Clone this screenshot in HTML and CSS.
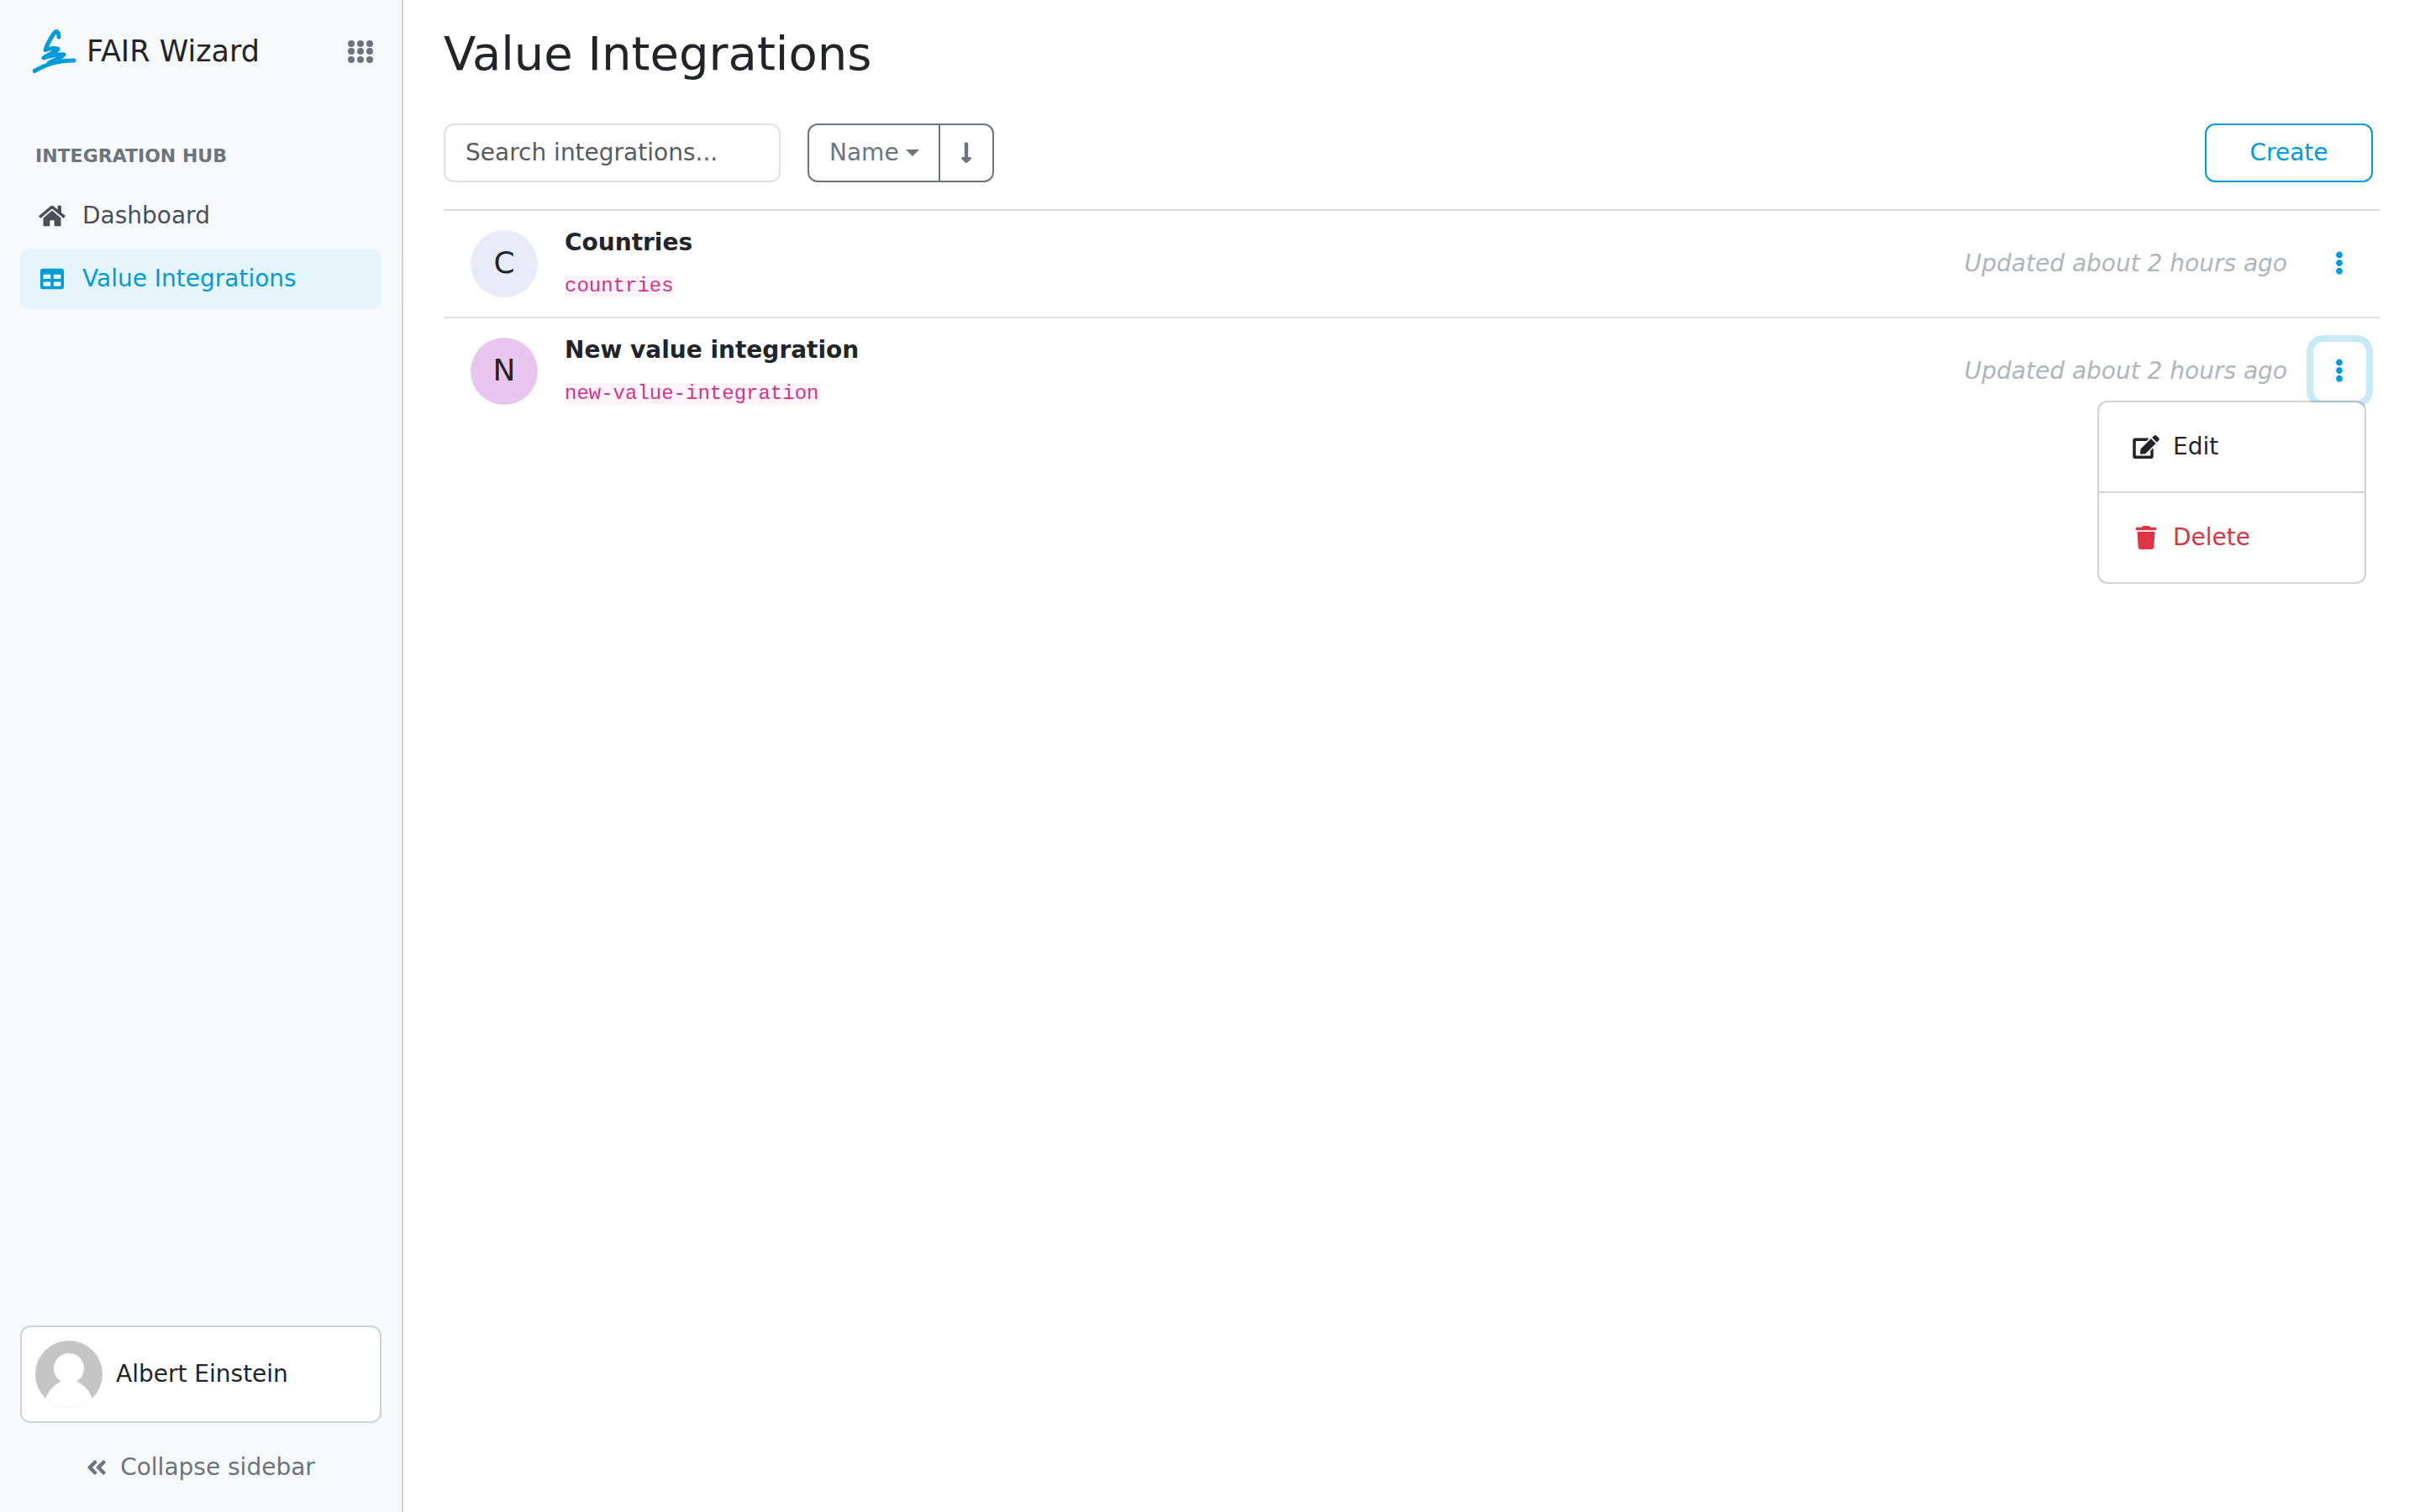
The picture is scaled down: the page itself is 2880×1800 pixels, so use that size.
FILE: index.html
```html
<!DOCTYPE html>
<html lang="en">
<head>
<meta charset="utf-8">
<title>Value Integrations – FAIR Wizard</title>
<meta name="viewport" content="width=device-width, initial-scale=1">
<link rel="stylesheet" href="styles.css">
</head>
<body>
<div class="app">
  <aside class="sidebar">
    <header class="brand">
      <a class="brand-link" href="#">
        <svg class="logo" viewBox="0 0 52 52" aria-hidden="true"><path d="M31 9C31 2 28 1 25 5C21 11 17 18 15 24.500C20 22 29 22 30 23.500C29 26 16 31 13 34C20 31 32 29 37 30C35 34 27 35 19 40" /><path d="M2 49.500C17 41 30 37 49 37"/></svg>
        <span>FAIR Wizard</span>
      </a>
      <button class="apps" type="button" aria-label="Apps">
        <svg viewBox="0 0 30 27" aria-hidden="true"><circle cx="4" cy="4" r="4"/><circle cx="15" cy="4" r="4"/><circle cx="26" cy="4" r="4"/><circle cx="4" cy="13" r="4"/><circle cx="15" cy="13" r="4"/><circle cx="26" cy="13" r="4"/><circle cx="4" cy="23" r="4"/><circle cx="15" cy="23" r="4"/><circle cx="26" cy="23" r="4"/></svg>
      </button>
    </header>
    <nav class="menu" aria-labelledby="menu-title">
      <h2 class="menu-title" id="menu-title">INTEGRATION HUB</h2>
      <a class="menu-item" href="#">
        <svg class="icon" viewBox="0 0 576 512" aria-hidden="true"><path d="M280.37 148.26L96 300.11V464a16 16 0 0 0 16 16l112.06-.29a16 16 0 0 0 15.92-16V368a16 16 0 0 1 16-16h64a16 16 0 0 1 16 16v95.64a16 16 0 0 0 16 16.05L464 480a16 16 0 0 0 16-16V300L295.67 148.26a12.19 12.19 0 0 0-15.3 0zM571.6 251.47L488 182.56V44.05a12 12 0 0 0-12-12h-56a12 12 0 0 0-12 12v72.61L318.47 43a48 48 0 0 0-61 0L4.34 251.47a12 12 0 0 0-1.6 16.9l25.5 31A12 12 0 0 0 45.15 301l235.22-193.74a12.19 12.19 0 0 1 15.3 0L530.9 301a12 12 0 0 0 16.9-1.6l25.5-31a12 12 0 0 0-1.7-16.93z"/></svg>
        <span>Dashboard</span>
      </a>
      <a class="menu-item active" href="#" aria-current="page">
        <svg class="icon" viewBox="0 0 512 512" aria-hidden="true"><path d="M464 32H48C21.49 32 0 53.49 0 80v352c0 26.51 21.49 48 48 48h416c26.51 0 48-21.49 48-48V80c0-26.51-21.49-48-48-48zM224 416H64v-96h160v96zm0-160H64v-96h160v96zm224 160H288v-96h160v96zm0-160H288v-96h160v96z"/></svg>
        <span>Value Integrations</span>
      </a>
    </nav>
    <footer class="sidebar-footer">
      <button class="user" type="button">
        <svg class="user-photo" viewBox="0 0 80 80" aria-hidden="true"><clipPath id="round"><circle cx="40" cy="40" r="40"/></clipPath><g clip-path="url(#round)"><rect width="80" height="80" fill="#c5c5c5"/><circle cx="40" cy="33" r="18" fill="#fff"/><path d="M32 48C22 52 15 60 12 70V80H68V70C65 60 58 52 48 48z" fill="#fff"/></g></svg>
        <span>Albert Einstein</span>
      </button>
      <button class="collapse" type="button">
        <svg class="icon-angles" viewBox="0 0 448 512" aria-hidden="true"><path d="M223.7 239l136-136c9.4-9.4 24.6-9.4 33.9 0l22.6 22.6c9.4 9.4 9.4 24.6 0 33.9L319.9 256l96.4 96.4c9.4 9.4 9.4 24.6 0 33.9L393.7 409c-9.4 9.4-24.6 9.4-33.9 0l-136-136c-9.5-9.4-9.5-24.6-.1-34zm-192 34l136 136c9.4 9.4 24.6 9.4 33.9 0l22.6-22.6c9.4-9.4 9.4-24.6 0-33.9L127.9 256l96.4-96.4c9.4-9.4 9.4-24.6 0-33.9L201.7 103c-9.4-9.4-24.6-9.4-33.9 0l-136 136c-9.5 9.4-9.5 24.6-.1 34z"/></svg>
        <span>Collapse sidebar</span>
      </button>
    </footer>
  </aside>

  <main class="content">
    <h1 class="title">Value Integrations</h1>
    <div class="toolbar">
      <input class="search" type="text" placeholder="Search integrations..." aria-label="Search integrations">
      <div class="sort" role="group" aria-label="Sort">
        <button class="sort-by" type="button">Name<span class="caret"></span></button>
        <button class="sort-dir" type="button" aria-label="Sort direction">
          <svg class="icon" viewBox="0 0 256 512" aria-hidden="true"><path d="M168 345.941V44c0-6.627-5.373-12-12-12h-56c-6.627 0-12 5.373-12 12v301.941H41.941c-21.382 0-32.09 25.851-16.971 40.971l86.059 86.059c9.373 9.373 24.569 9.373 33.941 0l86.059-86.059c15.119-15.119 4.411-40.971-16.971-40.971H168z"/></svg>
        </button>
      </div>
      <button class="create" type="button">Create</button>
    </div>
    <ul class="list">
      <li class="row">
        <span class="letter letter-c" aria-hidden="true">C</span>
        <div class="info">
          <a class="name" href="#">Countries</a>
          <code class="code">countries</code>
        </div>
        <span class="updated">Updated about 2 hours ago</span>
        <div class="actions">
          <button class="more" type="button" aria-label="More actions for Countries">
            <svg class="icon" viewBox="0 0 192 512" aria-hidden="true"><path d="M96 184c39.8 0 72 32.2 72 72s-32.2 72-72 72-72-32.2-72-72 32.2-72 72-72zM24 80c0 39.8 32.2 72 72 72s72-32.2 72-72S135.8 8 96 8 24 40.2 24 80zm0 352c0 39.8 32.2 72 72 72s72-32.2 72-72-32.2-72-72-72-72 32.2-72 72z"/></svg>
          </button>
        </div>
      </li>
      <li class="row">
        <span class="letter letter-n" aria-hidden="true">N</span>
        <div class="info">
          <a class="name" href="#">New value integration</a>
          <code class="code">new-value-integration</code>
        </div>
        <span class="updated">Updated about 2 hours ago</span>
        <div class="actions">
          <button class="more open" type="button" aria-expanded="true" aria-label="More actions for New value integration">
            <svg class="icon" viewBox="0 0 192 512" aria-hidden="true"><path d="M96 184c39.8 0 72 32.2 72 72s-32.2 72-72 72-72-32.2-72-72 32.2-72 72-72zM24 80c0 39.8 32.2 72 72 72s72-32.2 72-72S135.8 8 96 8 24 40.2 24 80zm0 352c0 39.8 32.2 72 72 72s72-32.2 72-72-32.2-72-72-72-72 32.2-72 72z"/></svg>
          </button>
          <div class="dropdown">
            <button class="option" type="button">
              <svg class="icon" viewBox="0 0 576 512" aria-hidden="true"><path d="M402.6 83.2l90.2 90.2c3.8 3.8 3.8 10 0 13.8L274.4 405.6l-92.8 10.3c-12.4 1.4-22.9-9.1-21.5-21.5l10.3-92.8L388.8 83.2c3.8-3.8 10-3.8 13.8 0zm162-22.9l-48.8-48.8c-15.2-15.2-39.9-15.2-55.2 0l-35.4 35.4c-3.8 3.8-3.8 10 0 13.8l90.2 90.2c3.8 3.8 10 3.8 13.8 0l35.4-35.4c15.2-15.3 15.2-40 0-55.2zM384 346.2V448H64V128h229.8c3.2 0 6.2-1.3 8.5-3.5l40-40c7.6-7.6 2.2-20.5-8.5-20.5H48C21.5 64 0 85.5 0 112v352c0 26.5 21.5 48 48 48h352c26.5 0 48-21.5 48-48V306.2c0-10.7-12.9-16-20.5-8.5l-40 40c-2.2 2.3-3.5 5.3-3.5 8.5z"/></svg>
              <span>Edit</span>
            </button>
            <button class="option danger" type="button">
              <svg class="icon" viewBox="0 0 448 512" aria-hidden="true"><path d="M432 32H312l-9.4-18.7A24 24 0 0 0 281.1 0H166.8a23.72 23.72 0 0 0-21.4 13.3L136 32H16A16 16 0 0 0 0 48v32a16 16 0 0 0 16 16h416a16 16 0 0 0 16-16V48a16 16 0 0 0-16-16zM53.2 467a48 48 0 0 0 47.9 45h245.8a48 48 0 0 0 47.9-45L416 128H32z"/></svg>
              <span>Delete</span>
            </button>
          </div>
        </div>
      </li>
    </ul>
  </main>
</div>
</body>
</html>
```
FILE: styles.css
```css
:root {
  --primary: #009bdb;
  --text: #212529;
  --gray: #6c757d;
  --line: #ced4da;
}

* {
  box-sizing: border-box;
}

body {
  margin: 0;
  background: #fff;
  color: var(--text);
  font: 28px/42px "DejaVu Sans", sans-serif;
}

button,
input {
  margin: 0;
  padding: 0;
  border: 0;
  background: none;
  color: inherit;
  font: inherit;
}

a {
  color: inherit;
  text-decoration: none;
}

svg {
  display: block;
  flex: none;
  fill: currentColor;
}

.icon {
  width: 36px;
  height: 28px;
}

.app {
  display: flex;
  min-height: 100vh;
}

/* Sidebar */

.sidebar {
  display: flex;
  flex: none;
  flex-direction: column;
  width: 480px;
  padding: 32px 24px;
  border-right: 2px solid var(--line);
  background: #f8f9fb;
}

.brand {
  display: flex;
  align-items: center;
  justify-content: space-between;
  height: 58px;
  padding: 0 10px 0 15px;
}

.brand-link {
  display: flex;
  align-items: center;
  gap: 12px;
  font-size: 35px;
}

.logo {
  width: 52px;
  height: 52px;
  fill: none;
  stroke: var(--primary);
  stroke-width: 5;
  stroke-linecap: round;
  stroke-linejoin: round;
}

.apps {
  color: var(--gray);
}

.apps svg {
  width: 30px;
  height: 27px;
}

.menu {
  display: flex;
  flex-direction: column;
  gap: 3px;
  margin-top: 75px;
}

.menu-title {
  margin: 0 0 11px;
  padding-left: 18px;
  color: var(--gray);
  font-size: 22px;
  line-height: 42px;
}

.menu-item {
  display: flex;
  align-items: center;
  gap: 18px;
  height: 72px;
  padding: 0 20px;
  border-radius: 12px;
  color: #495057;
}

.menu-item.active {
  background: #e5f5fb;
  color: var(--primary);
}

.sidebar-footer {
  display: flex;
  flex-direction: column;
  gap: 32px;
  margin-top: auto;
}

.user {
  display: flex;
  align-items: center;
  gap: 16px;
  padding: 16px;
  border: 2px solid var(--line);
  border-radius: 12px;
  background: #fff;
}

.user-photo {
  width: 80px;
  height: 80px;
}

.collapse {
  display: flex;
  align-items: center;
  justify-content: center;
  gap: 16px;
  color: var(--gray);
}

.icon-angles {
  width: 24px;
  height: 28px;
}

/* Page */

.content {
  flex: 1;
  min-width: 0;
  padding: 32px 48px;
}

.title {
  margin: 0;
  font-size: 56px;
  font-weight: 400;
  line-height: 64px;
}

.toolbar {
  display: flex;
  align-items: stretch;
  gap: 32px;
  height: 70px;
  margin-top: 51px;
  padding-right: 8px;
}

.search {
  width: 401px;
  padding: 0 24px;
  border: 2px solid #dee2e6;
  border-radius: 12px;
}

.search::placeholder {
  color: #595c5f;
  opacity: 1;
}

.sort {
  display: flex;
  border: 2px solid var(--gray);
  border-radius: 12px;
  color: var(--gray);
}

.sort-by {
  display: flex;
  align-items: center;
  gap: 8px;
  padding: 0 23px 0 24px;
}

.caret {
  border: 8px solid transparent;
  border-top-color: currentColor;
  border-bottom: 0;
}

.sort-dir {
  padding: 0 13px;
  border-left: 2px solid var(--gray);
}

.create {
  min-width: 200px;
  margin-left: auto;
  border: 2px solid var(--primary);
  border-radius: 12px;
  color: var(--primary);
}

.list {
  margin: 32px 0 0;
  padding: 0;
  list-style: none;
}

.row {
  display: flex;
  align-items: center;
  padding: 23px 16px 23px 32px;
  border-top: 2px solid #dee2e6;
}

.row:first-child {
  border-top-color: #dedede;
}

.letter {
  flex: none;
  width: 80px;
  height: 80px;
  border-radius: 50%;
  font-size: 36px;
  line-height: 78px;
  text-align: center;
}

.letter-c {
  background: #e9ebf9;
}

.letter-n {
  background: #e9c6f0;
}

.info {
  display: flex;
  flex: 1;
  flex-direction: column;
  align-items: flex-start;
  gap: 24px;
  margin-left: 32px;
}

.name {
  font-weight: 700;
  line-height: 30px;
}

.code {
  background: #fff4fa;
  color: #d63384;
  font: 24px/26px "Liberation Mono", monospace;
}

.updated {
  color: #adb5bd;
  font-style: italic;
}

.actions {
  position: relative;
  margin-left: 31px;
}

.more {
  display: flex;
  align-items: center;
  justify-content: center;
  width: 63px;
  height: 70px;
  padding: 0 1px 2px 0;
  border-radius: 12px;
  color: var(--primary);
}

.more.open {
  box-shadow: 0 0 0 8px #c8eaf6;
}

.dropdown {
  position: absolute;
  top: 100%;
  right: 0;
  width: 320px;
  border: 2px solid rgba(0, 0, 0, 0.18);
  border-radius: 12px;
  background: #fff;
  background-clip: padding-box;
}

.option {
  display: flex;
  align-items: center;
  gap: 14px;
  width: 100%;
  height: 106px;
  padding: 0 38px;
}

.danger {
  height: 108px;
  border-top: 2px solid #d1d1d1;
  color: #dc3545;
}
```
